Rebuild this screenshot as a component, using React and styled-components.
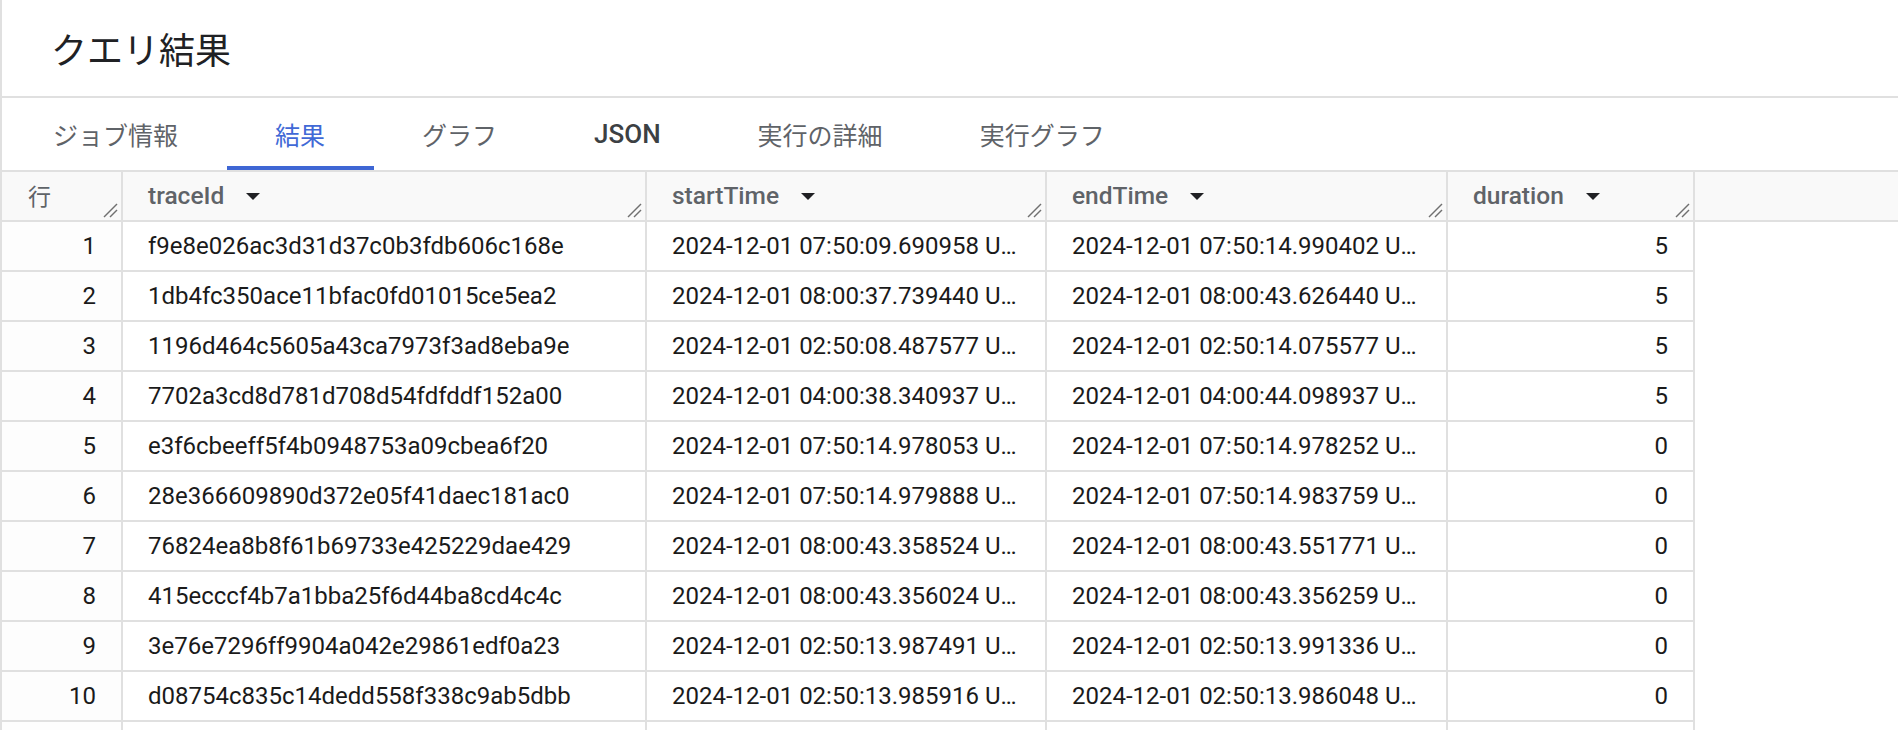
import React from "react";
import styled, { createGlobalStyle } from "styled-components";

const GlobalStyle = createGlobalStyle`
  html, body {
    margin: 0;
    padding: 0;
    background: #ffffff;
  }
  body {
    font-family: Roboto, "Noto Sans CJK JP", sans-serif;
    overflow: hidden;
  }
`;

const Page = styled.div`
  width: 100%;
  height: 730px;
  border-left: 2px solid #e0e0e0;
  box-sizing: border-box;
  overflow: hidden;
`;

const Header = styled.div`
  height: 96px;
  border-bottom: 2px solid #e0e0e0;
  display: flex;
  align-items: center;
  padding-left: 49px;
`;

const Title = styled.h1`
  margin: 0;
  font-family: Roboto, "Noto Sans CJK JP", sans-serif;
  font-size: 36px;
  font-weight: 400;
  color: #202124;
`;

const TabBar = styled.div`
  display: flex;
  padding-left: 2.5px;
  height: 72px;
`;

const Tab = styled.div`
  box-sizing: border-box;
  height: 72px;
  padding: 4px 48.5px 0;
  display: flex;
  align-items: center;
  font-family: Roboto, "Noto Sans CJK JP", sans-serif;
  font-size: ${(p) => (p.$bold ? "26px" : "25px")};
  font-weight: ${(p) => (p.$bold ? 500 : 400)};
  color: ${(p) => (p.$active ? "#4169d6" : p.$bold ? "#3c4043" : "#5f6368")};
  border-bottom: 4px solid ${(p) => (p.$active ? "#3e66d4" : "transparent")};
  white-space: nowrap;
`;

const Grid = styled.div`
  display: grid;
  grid-template-columns: 121px 524px 400px 401px 247px 1fr;
  grid-auto-rows: 50px;
  border-top: 2px solid #e0e0e0;
`;

const HeadCell = styled.div`
  position: relative;
  box-sizing: border-box;
  background: #f9f9f9;
  border-bottom: 2px solid #e0e0e0;
  border-right: ${(p) => (p.$last ? "none" : "2px solid #e0e0e0")};
  display: flex;
  align-items: center;
  padding-left: 25px;
  padding-bottom: 2px;
  font-size: 24.5px;
  font-weight: 500;
  color: #5f6368;
  white-space: nowrap;
`;

const RowLabel = styled.span`
  font-family: "Noto Sans CJK JP", sans-serif;
  font-weight: 400;
  font-size: 23px;
  margin-left: 1px;
`;

const SortArrow = styled.span`
  width: 0;
  height: 0;
  margin-left: 22px;
  margin-top: 2px;
  border-left: 7.5px solid transparent;
  border-right: 7.5px solid transparent;
  border-top: 7.5px solid #202124;
`;

const Resize = styled.svg`
  position: absolute;
  right: 3px;
  bottom: 2px;
  width: 15px;
  height: 15px;
`;

const Cell = styled.div`
  box-sizing: border-box;
  background: ${(p) => (p.$num ? "#fdfdfd" : "#ffffff")};
  border-bottom: 2px solid #e0e0e0;
  border-right: 2px solid #e0e0e0;
  display: flex;
  align-items: center;
  justify-content: ${(p) => (p.$right ? "flex-end" : "flex-start")};
  padding: ${(p) => (p.$right ? "0 25px 0 0" : "0 25px")};
  font-size: 24px;
  color: #1a1a1a;
  overflow: hidden;
  min-width: 0;
`;

const CellText = styled.span`
  white-space: nowrap;
  overflow: hidden;
  text-overflow: ellipsis;
`;

const Filler = styled.div`
  background: #ffffff;
`;

const columns = ["traceId", "startTime", "endTime", "duration"];

const rows = [
  ["f9e8e026ac3d31d37c0b3fdb606c168e", "2024-12-01 07:50:09.690958 UTC", "2024-12-01 07:50:14.990402 UTC", 5],
  ["1db4fc350ace11bfac0fd01015ce5ea2", "2024-12-01 08:00:37.739440 UTC", "2024-12-01 08:00:43.626440 UTC", 5],
  ["1196d464c5605a43ca7973f3ad8eba9e", "2024-12-01 02:50:08.487577 UTC", "2024-12-01 02:50:14.075577 UTC", 5],
  ["7702a3cd8d781d708d54fdfddf152a00", "2024-12-01 04:00:38.340937 UTC", "2024-12-01 04:00:44.098937 UTC", 5],
  ["e3f6cbeeff5f4b0948753a09cbea6f20", "2024-12-01 07:50:14.978053 UTC", "2024-12-01 07:50:14.978252 UTC", 0],
  ["28e366609890d372e05f41daec181ac0", "2024-12-01 07:50:14.979888 UTC", "2024-12-01 07:50:14.983759 UTC", 0],
  ["76824ea8b8f61b69733e425229dae429", "2024-12-01 08:00:43.358524 UTC", "2024-12-01 08:00:43.551771 UTC", 0],
  ["415ecccf4b7a1bba25f6d44ba8cd4c4c", "2024-12-01 08:00:43.356024 UTC", "2024-12-01 08:00:43.356259 UTC", 0],
  ["3e76e7296ff9904a042e29861edf0a23", "2024-12-01 02:50:13.987491 UTC", "2024-12-01 02:50:13.991336 UTC", 0],
  ["d08754c835c14dedd558f338c9ab5dbb", "2024-12-01 02:50:13.985916 UTC", "2024-12-01 02:50:13.986048 UTC", 0],
];

const tabs = ["ジョブ情報", "結果", "グラフ", "JSON", "実行の詳細", "実行グラフ"];

const ResizeHandle = () => (
  <Resize viewBox="0 0 15 15">
    <line x1="1" y1="14" x2="14" y2="1" stroke="#707070" strokeWidth="1.4" />
    <line x1="7" y1="14" x2="14" y2="7" stroke="#707070" strokeWidth="1.4" />
  </Resize>
);

const App = () => {
  return (
    <>
      <GlobalStyle />
      <Page>
        <Header>
          <Title>クエリ結果</Title>
        </Header>
        <TabBar>
          {tabs.map((t) => (
            <Tab key={t} $active={t === "結果"} $bold={t === "JSON"}>
              {t}
            </Tab>
          ))}
        </TabBar>
        <Grid>
          <HeadCell>
            <RowLabel>行</RowLabel>
            <ResizeHandle />
          </HeadCell>
          {columns.map((c) => (
            <HeadCell key={c}>
              {c}
              <SortArrow />
              <ResizeHandle />
            </HeadCell>
          ))}
          <HeadCell $last />
          {rows.map((r, i) => (
            <React.Fragment key={r[0]}>
              <Cell $num $right>
                {i + 1}
              </Cell>
              <Cell>
                <CellText>{r[0]}</CellText>
              </Cell>
              <Cell>
                <CellText>{r[1]}</CellText>
              </Cell>
              <Cell>
                <CellText>{r[2]}</CellText>
              </Cell>
              <Cell $right>{r[3]}</Cell>
              <Filler />
            </React.Fragment>
          ))}
          <Cell $num />
          <Cell />
          <Cell />
          <Cell />
          <Cell />
          <Filler />
        </Grid>
      </Page>
    </>
  );
};

export default App;
